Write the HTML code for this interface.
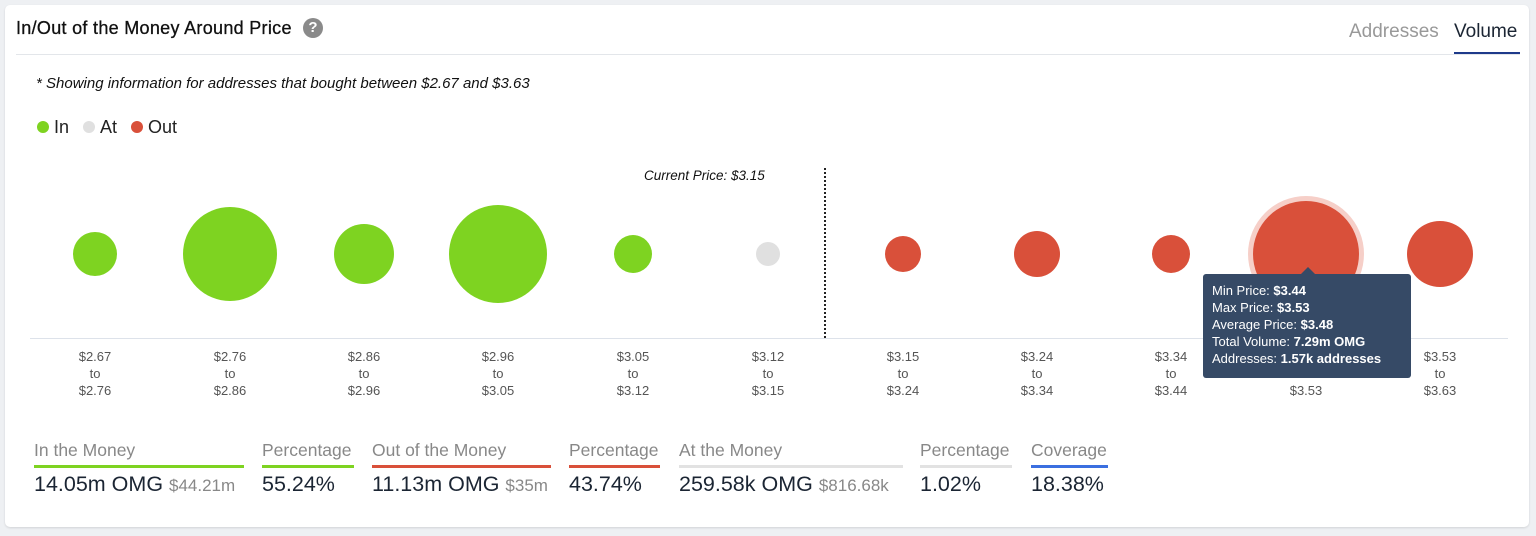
<!DOCTYPE html>
<html><head><meta charset="utf-8"><style>
body{margin:0;background:#eef0f3;font-family:"Liberation Sans",sans-serif;width:1536px;height:536px;position:relative;overflow:hidden}
.card{position:absolute;left:5px;top:5px;width:1524px;height:522px;background:#fff;border-radius:5px;box-shadow:0 1px 2px rgba(0,0,0,.12)}
.a{position:absolute;white-space:nowrap}
.b{position:absolute;border-radius:50%}
.g{background:#7ed321}.r{background:#d9503a}
.lab{position:absolute;top:348px;width:80px;text-align:center;color:#555;font-size:13px;line-height:17px}
.h{position:absolute;top:440px;font-size:17.5px;color:#888;padding-bottom:4px;border-bottom:3px solid}
.v{position:absolute;top:472px;font-size:21.5px;color:#1b2533}
.v small{font-size:17px;color:#888}
</style></head><body>
<div class="card"></div>
<div class="a" style="left:16px;top:18px;font-size:18px;color:#111;letter-spacing:0.3px;-webkit-text-stroke:0.3px #111">In/Out of the Money Around Price</div>
<div class="a" style="left:303px;top:18px;width:20px;height:20px;border-radius:50%;background:#8a8a8a;color:#fff;font-weight:bold;font-size:15px;text-align:center;line-height:20px">?</div>
<div class="a" style="left:16px;top:54px;width:1504px;height:1px;background:#e3e6ea"></div>
<div class="a" style="left:1349px;top:21px;font-size:19px;color:#999">Addresses</div>
<div class="a" style="left:1454px;top:21px;font-size:19px;color:#1b2533">Volume</div>
<div class="a" style="left:1454px;top:52px;width:66px;height:2px;background:#1e3a8a"></div>
<div class="a" style="left:36px;top:75px;font-size:15px;font-style:italic;color:#111">* Showing information for addresses that bought between $2.67 and $3.63</div>
<div class="b g" style="left:37px;top:121px;width:12px;height:12px"></div>
<div class="a" style="left:54px;top:117px;font-size:18px;color:#222">In</div>
<div class="b" style="left:83px;top:121px;width:12px;height:12px;background:#e0e0e0"></div>
<div class="a" style="left:100px;top:117px;font-size:18px;color:#222">At</div>
<div class="b r" style="left:131px;top:121px;width:12px;height:12px"></div>
<div class="a" style="left:148px;top:117px;font-size:18px;color:#222">Out</div>
<div class="a" style="left:644px;top:168px;font-size:13.5px;font-style:italic;color:#111">Current Price: $3.15</div>
<div class="a" style="left:824px;top:168px;height:170px;border-left:2px dotted #222"></div>
<div class="a" style="left:30px;top:338px;width:1478px;height:1px;background:#dde2ea"></div>
<div class="b g" style="left:73px;top:232px;width:44px;height:44px"></div>
<div class="b g" style="left:183px;top:207px;width:94px;height:94px"></div>
<div class="b g" style="left:334px;top:224px;width:60px;height:60px"></div>
<div class="b g" style="left:449px;top:205px;width:98px;height:98px"></div>
<div class="b g" style="left:614px;top:235px;width:38px;height:38px"></div>
<div class="b" style="left:756px;top:242px;width:24px;height:24px;background:#e0e0e0"></div>
<div class="b r" style="left:885px;top:236px;width:36px;height:36px"></div>
<div class="b r" style="left:1014px;top:231px;width:46px;height:46px"></div>
<div class="b r" style="left:1152px;top:235px;width:38px;height:38px"></div>
<div class="b" style="left:1248px;top:196px;width:116px;height:116px;background:#f6cfc8"></div>
<div class="b r" style="left:1253px;top:201px;width:106px;height:106px"></div>
<div class="b r" style="left:1407px;top:221px;width:66px;height:66px"></div>
<div class="lab" style="left:55px">$2.67<br>to<br>$2.76</div>
<div class="lab" style="left:190px">$2.76<br>to<br>$2.86</div>
<div class="lab" style="left:324px">$2.86<br>to<br>$2.96</div>
<div class="lab" style="left:458px">$2.96<br>to<br>$3.05</div>
<div class="lab" style="left:593px">$3.05<br>to<br>$3.12</div>
<div class="lab" style="left:728px">$3.12<br>to<br>$3.15</div>
<div class="lab" style="left:863px">$3.15<br>to<br>$3.24</div>
<div class="lab" style="left:997px">$3.24<br>to<br>$3.34</div>
<div class="lab" style="left:1131px">$3.34<br>to<br>$3.44</div>
<div class="lab" style="left:1266px">$3.44<br>to<br>$3.53</div>
<div class="lab" style="left:1400px">$3.53<br>to<br>$3.63</div>
<div class="a" style="left:1301px;top:267px;width:0;height:0;border:7px solid transparent;border-bottom-color:#364a66;border-top:0"></div>
<div class="a" style="left:1203px;top:274px;width:208px;height:104px;background:#364a66;border-radius:3px;color:#fff;font-size:13px;line-height:17px;padding:8px 0 0 9px;box-sizing:border-box">Min Price: <b>$3.44</b><br>Max Price: <b>$3.53</b><br>Average Price: <b>$3.48</b><br>Total Volume: <b>7.29m OMG</b><br>Addresses: <b>1.57k addresses</b></div>
<div class="h" style="left:34px;width:210px;border-color:#7ed321">In the Money</div>
<div class="h" style="left:262px;width:92px;border-color:#7ed321">Percentage</div>
<div class="h" style="left:372px;width:179px;border-color:#d9503a">Out of the Money</div>
<div class="h" style="left:569px;width:91px;border-color:#d9503a">Percentage</div>
<div class="h" style="left:679px;width:224px;border-color:#e2e2e2">At the Money</div>
<div class="h" style="left:920px;width:92px;border-color:#e2e2e2">Percentage</div>
<div class="h" style="left:1031px;width:77px;border-color:#3b6fe0">Coverage</div>
<div class="v" style="left:34px">14.05m OMG <small>$44.21m</small></div>
<div class="v" style="left:262px">55.24%</div>
<div class="v" style="left:372px">11.13m OMG <small>$35m</small></div>
<div class="v" style="left:569px">43.74%</div>
<div class="v" style="left:679px">259.58k OMG <small>$816.68k</small></div>
<div class="v" style="left:920px">1.02%</div>
<div class="v" style="left:1031px">18.38%</div>
</body></html>
